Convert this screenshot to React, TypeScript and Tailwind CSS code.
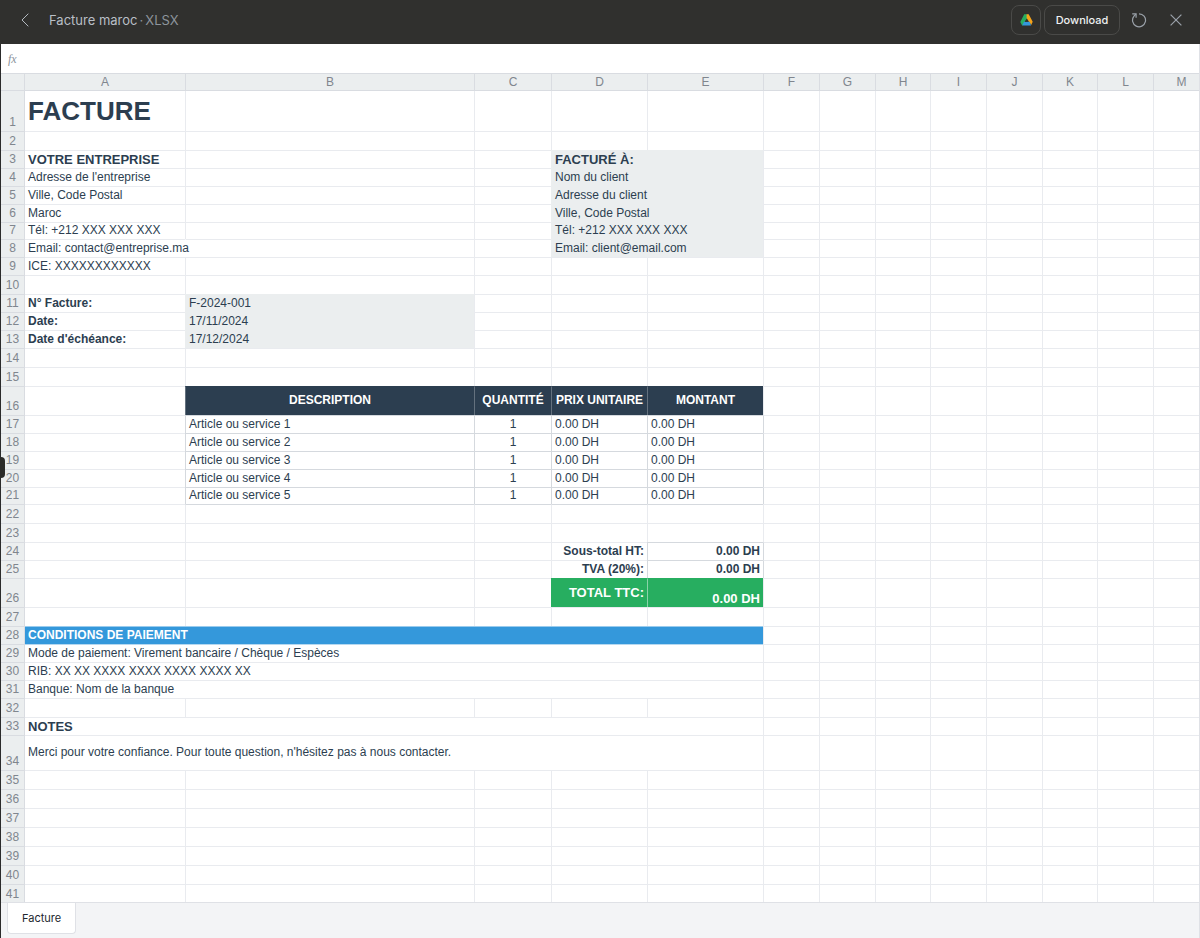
import React from "react";

type Cell = {
  text?: string;
  span?: number;
  className?: string;
};

const columns: { name: string; width: string }[] = [
  { name: "A", width: "w-[160px]" },
  { name: "B", width: "w-[289px]" },
  { name: "C", width: "w-[77px]" },
  { name: "D", width: "w-[96px]" },
  { name: "E", width: "w-[116px]" },
  { name: "F", width: "w-[56px]" },
  { name: "G", width: "w-[56px]" },
  { name: "H", width: "w-[55px]" },
  { name: "I", width: "w-[56px]" },
  { name: "J", width: "w-[56px]" },
  { name: "K", width: "w-[55px]" },
  { name: "L", width: "w-[56px]" },
  { name: "M", width: "w-[56px]" },
];

const tallRows: Record<number, string> = {
  1: "h-[40px]",
  2: "h-[19px]",
  7: "h-[17px]",
  10: "h-[19px]",
  14: "h-[19px]",
  15: "h-[19px]",
  16: "h-[29px]",
  21: "h-[17px]",
  22: "h-[19px]",
  23: "h-[19px]",
  26: "h-[29px]",
  27: "h-[19px]",
  32: "h-[19px]",
  34: "h-[35px]",
};

const rowHeight = (n: number) => tallRows[n] ?? (n > 34 ? "h-[19px]" : "h-[18px]");

const LINE = "border-[#e9ebef]";
const STRONG = "border-[#d5d9de]";
const SHADE = "bg-[#ebeeef] border-[#ebeeef]";
const HEAD = "bg-[#2c3e50] border-t-[#2c3e50] border-l-[#64717e] text-center align-middle font-bold text-white";
const BLUE = "bg-[#3498db] border-[#3498db] border-t-[#9acbed] font-bold text-white";
const GREEN = "bg-[#27ae60] border-[#27ae60] text-right text-[13px] font-bold text-white";

const cells: Record<string, Cell> = {
  A1: { text: "FACTURE", className: "text-[26px] leading-[36px] font-bold align-middle" },
  A3: { text: "VOTRE ENTREPRISE", className: "text-[13px] font-bold" },
  A4: { text: "Adresse de l'entreprise" },
  A5: { text: "Ville, Code Postal" },
  A6: { text: "Maroc" },
  A7: { text: "Tél: +212 XXX XXX XXX" },
  A8: { text: "Email: contact@entreprise.ma" },
  B8: { className: `${LINE} border-l-transparent` },
  A9: { text: "ICE: XXXXXXXXXXXX" },
  D3: { text: "FACTURÉ À:", span: 2, className: `${SHADE} text-[13px] font-bold` },
  D4: { text: "Nom du client", span: 2, className: SHADE },
  D5: { text: "Adresse du client", span: 2, className: SHADE },
  D6: { text: "Ville, Code Postal", span: 2, className: SHADE },
  D7: { text: "Tél: +212 XXX XXX XXX", span: 2, className: SHADE },
  D8: { text: "Email: client@email.com", span: 2, className: SHADE },
  A11: { text: "N° Facture:", className: "font-bold" },
  A12: { text: "Date:", className: "font-bold" },
  A13: { text: "Date d'échéance:", className: "font-bold" },
  B11: { text: "F-2024-001", className: SHADE },
  B12: { text: "17/11/2024", className: SHADE },
  B13: { text: "17/12/2024", className: SHADE },
  B16: { text: "DESCRIPTION", className: HEAD },
  C16: { text: "QUANTITÉ", className: HEAD },
  D16: { text: "PRIX UNITAIRE", className: HEAD },
  E16: { text: "MONTANT", className: HEAD },
  D24: { text: "Sous-total HT:", className: `${LINE} text-right font-bold` },
  E24: { text: "0.00 DH", className: `${STRONG} text-right font-bold` },
  D25: { text: "TVA (20%):", className: `${LINE} text-right font-bold` },
  E25: { text: "0.00 DH", className: `${STRONG} text-right font-bold` },
  D26: { text: "TOTAL TTC:", className: `${GREEN} align-middle` },
  E26: { text: "0.00 DH", className: `${GREEN} border-l-[#8ad3a9]` },
  A28: { text: "CONDITIONS DE PAIEMENT", span: 5, className: BLUE },
  A29: {
    text: "Mode de paiement: Virement bancaire / Chèque / Espèces",
    span: 5,
    className: `${LINE} border-t-[#b5d8f0]`,
  },
  A30: { text: "RIB: XX XX XXXX XXXX XXXX XXXX XX", span: 5 },
  A31: { text: "Banque: Nom de la banque", span: 5 },
  A33: { text: "NOTES", span: 5, className: "text-[13px] font-bold" },
  A34: {
    text: "Merci pour votre confiance. Pour toute question, n'hésitez pas à nous contacter.",
    span: 5,
    className: "align-middle",
  },
};

for (let i = 1; i <= 5; i++) {
  const row = 16 + i;
  cells[`B${row}`] = { text: `Article ou service ${i}`, className: STRONG };
  cells[`C${row}`] = { text: "1", className: `${STRONG} text-center` };
  cells[`D${row}`] = { text: "0.00 DH", className: STRONG };
  cells[`E${row}`] = { text: "0.00 DH", className: STRONG };
  cells[`F${row}`] = { className: `${LINE} border-l-[#d5d9de]` };
}
["B22", "C22", "D22", "E22"].forEach((key) => {
  cells[key] = { className: `${LINE} border-t-[#d5d9de]` };
});
["F24", "F25"].forEach((key) => {
  cells[key] = { className: `${LINE} border-l-[#d5d9de]` };
});

function SheetRow({ n }: { n: number }) {
  const out: React.ReactNode[] = [];
  for (let c = 0; c < columns.length; ) {
    const cell = cells[`${columns[c].name}${n}`] ?? {};
    const own = cell.className ?? "";
    const align = own.includes("align-middle") ? "" : "align-bottom";
    const color = own.includes("border-[") || own.includes("border-t-[") ? "" : LINE;
    const left = c === 0 ? "" : "border-l";
    const top = n === 1 ? "" : "border-t";
    out.push(
      <td
        key={c}
        colSpan={cell.span}
        className={`${left} ${top} px-[3px] pb-px whitespace-nowrap ${align} ${color} ${own}`}
      >
        {cell.text}
      </td>,
    );
    c += cell.span ?? 1;
  }
  return (
    <tr className={rowHeight(n)}>
      <th
        scope="row"
        className={`${n === 1 ? "" : "border-t"} border-r border-[#d9dce1] bg-[#ebeeef] pb-px text-center align-bottom font-normal text-[#80868e]`}
      >
        {n}
      </th>
      {out}
    </tr>
  );
}

function DriveIcon() {
  return (
    <svg viewBox="0 0 13 12" className="h-3 w-[13px]" aria-hidden="true">
      <path d="M4.2 0.3h3.2v4L4.6 8 3 11.2H2L0.3 8z" fill="#27ae60" />
      <path d="M6.6 0.3h2.1L12.7 7.8 11.2 11 10.2 9.4 9 7.8 6.6 4z" fill="#f5a31a" />
      <path d="M4 7.8h5.6l1.5 3.6H2.2z" fill="#3498db" />
      <path d="M6.5 4.8 8.2 7.8H4.8z" fill="#30302e" />
    </svg>
  );
}

export default function App() {
  return (
    <div className="flex h-screen flex-col overflow-hidden bg-white font-['Liberation_Sans',Arial,sans-serif] text-[#2c3e50]">
      <header className="flex h-11 shrink-0 items-center bg-[#30302e] pr-3 pb-1 pl-[15px] font-[Inter,sans-serif]">
        <button type="button" aria-label="Back" className="flex h-5 w-5 items-center justify-center text-[#b4bac1]">
          <svg viewBox="0 0 8 14" className="h-[14px] w-2" fill="none" stroke="currentColor" aria-hidden="true">
            <path d="M7.3 0.7 1 7l6.3 6.3" />
          </svg>
        </button>
        <h1 className="ml-[14px] flex gap-[2px] text-[13px] leading-5 text-[#b9bfc6]">
          <span>Facture maroc</span>
          <span className="text-[#8d949c]">·</span>
          <span className="text-[#8d949c]">XLSX</span>
        </h1>
        <div className="ml-auto flex items-center">
          <button
            type="button"
            aria-label="Open in Drive"
            className="flex h-[30px] w-[30px] items-center justify-center rounded-lg border border-[#4a4a48]"
          >
            <DriveIcon />
          </button>
          <button
            type="button"
            className="ml-[3px] h-[30px] w-[76px] rounded-lg border border-[#4a4a48] text-[11px] font-medium text-[#eef0f2]"
          >
            Download
          </button>
          <button type="button" aria-label="Reload" className="ml-[7px] flex h-6 w-6 items-center justify-center text-[#9aa1a9]">
            <svg viewBox="0 0 16 16" className="h-4 w-4" fill="none" stroke="currentColor" strokeWidth="1.2" aria-hidden="true">
              <path d="M8 1.8A6.5 6.5 0 1 1 3 4.2L4.8 2.2" />
              <path d="M1.2 1.8h3.9v3.9" />
            </svg>
          </button>
          <button type="button" aria-label="Close" className="ml-[13px] flex h-6 w-6 items-center justify-center text-[#9aa1a9]">
            <svg viewBox="0 0 12 12" className="h-3 w-3" fill="none" stroke="currentColor" strokeWidth="1.2" aria-hidden="true">
              <path d="M0.6 0.6l10.8 10.8M11.4 0.6 0.6 11.4" />
            </svg>
          </button>
        </div>
      </header>

      <main className="relative flex min-h-0 flex-1 flex-col border-r border-l border-r-[#dfe1e6] border-l-[#2b2b2b]">
        <div className="flex h-[29px] shrink-0 items-center pl-[7px]">
          <label htmlFor="formula" className="w-6 font-['Liberation_Serif',serif] text-[12px] text-[#8d949c] italic">
            fx
          </label>
          <input id="formula" type="text" className="h-full flex-1 text-[12px] outline-none" />
        </div>

        <div className="min-h-0 flex-1 overflow-hidden">
          <table className="w-full table-fixed border-separate border-spacing-0 text-[12px] leading-[15px]">
            <colgroup>
              <col className="w-6" />
              {columns.map((col) => (
                <col key={col.name} className={col.width} />
              ))}
            </colgroup>
            <thead>
              <tr className="h-[18px] bg-[#ebeeef] text-[#80868e]">
                <td className="border-y border-r border-[#d9dce1]" />
                {columns.map((col, i) => (
                  <th
                    key={col.name}
                    scope="col"
                    className={`${i === 0 ? "" : "border-l"} border-y border-[#d9dce1] font-normal`}
                  >
                    {col.name}
                  </th>
                ))}
              </tr>
            </thead>
            <tbody>
              {Array.from({ length: 41 }, (_, i) => (
                <SheetRow key={i} n={i + 1} />
              ))}
            </tbody>
          </table>
        </div>

        <nav className="flex h-9 shrink-0 items-start border-t border-[#dfe1e6] bg-[#f3f4f6] pl-[6px]">
          <button
            type="button"
            className="h-[31px] rounded-b border border-t-0 border-[#dfe1e6] bg-white px-[14px] font-[Inter,sans-serif] text-[11px] text-[#22272e]"
          >
            Facture
          </button>
        </nav>
        <div className="absolute top-[413px] -left-px h-[21px] w-[5px] rounded-r bg-[#2b2b29]" />
      </main>
    </div>
  );
}
